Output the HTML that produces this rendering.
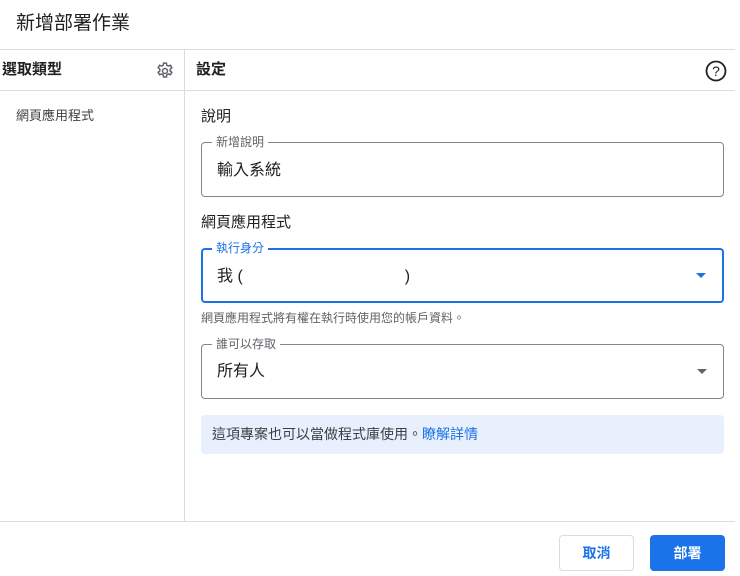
<!DOCTYPE html>
<html><head><meta charset="utf-8"><style>
*{margin:0;padding:0;box-sizing:border-box}
body{width:740px;height:576px;background:#fff;font-family:"Liberation Sans","Noto Sans CJK TC",sans-serif;color:#202124;position:relative;overflow:hidden}
.a{position:absolute}
.box{position:absolute;border:1px solid #80868b;border-radius:4px}
.lab{position:absolute;top:-9px;left:10px;background:#fff;padding:0 4px;font-size:12px;color:#5f6368;line-height:16px}
</style></head><body>
<div class="a" style="left:16px;top:11px;font-size:19px;line-height:26px">新增部署作業</div>
<div class="a" style="left:0;top:49px;width:735px;height:1px;background:#dadce0"></div>
<div class="a" style="left:0;top:90px;width:735px;height:1px;background:#dadce0"></div>
<div class="a" style="left:184px;top:50px;width:1px;height:472px;background:#dadce0"></div>
<div class="a" style="left:0;top:521px;width:735px;height:1px;background:#dadce0"></div>
<div class="a" style="left:2px;top:60px;font-size:15px;font-weight:bold;line-height:20px">選取類型</div>
<svg class="a" style="left:155px;top:61px" width="20" height="20" viewBox="0 0 24 24"><path fill="none" stroke="#5f6368" stroke-width="1.8" d="M10.3 2.5h3.4l.5 2.6 1.8 1 2.5-.9 1.7 2.9-2 1.7v2.1l2 1.7-1.7 2.9-2.5-.9-1.8 1-.5 2.6h-3.4l-.5-2.6-1.8-1-2.5.9-1.7-2.9 2-1.7v-2.1l-2-1.7 1.7-2.9 2.5.9 1.8-1z"/><circle cx="12" cy="12" r="3" fill="none" stroke="#5f6368" stroke-width="1.8"/></svg>
<div class="a" style="left:196px;top:60px;font-size:15px;font-weight:bold;line-height:20px">設定</div>
<svg class="a" style="left:705px;top:60px" width="22" height="22" viewBox="0 0 22 22"><circle cx="11" cy="11" r="9.5" fill="none" stroke="#202124" stroke-width="1.8"/><text x="11" y="16" text-anchor="middle" font-size="14" font-family="Liberation Sans" fill="#202124">?</text></svg>
<div class="a" style="left:16px;top:107px;font-size:13px;color:#3c4043;line-height:18px">網頁應用程式</div>
<div class="a" style="left:201px;top:107px;font-size:15px;line-height:20px">說明</div>
<div class="box" style="left:201px;top:142px;width:523px;height:55px"><div class="lab">新增說明</div><div class="a" style="left:15px;top:17px;font-size:16px;line-height:22px">輸入系統</div></div>
<div class="a" style="left:201px;top:213px;font-size:15px;line-height:20px">網頁應用程式</div>
<div class="box" style="left:201px;top:248px;width:523px;height:55px;border:2px solid #1a73e8"><div class="lab" style="color:#1a73e8;top:-10px;left:9px">執行身分</div><div class="a" style="left:14px;top:16px;font-size:16px;line-height:22px">我 (<span style="margin-left:162px">)</span></div>
<div class="a" style="right:16px;top:23px;width:0;height:0;border-left:5px solid transparent;border-right:5px solid transparent;border-top:5px solid #1a73e8"></div></div>
<div class="a" style="left:201px;top:310px;font-size:12px;color:#5f6368;line-height:16px">網頁應用程式將有權在執行時使用您的帳戶資料。</div>
<div class="box" style="left:201px;top:344px;width:523px;height:55px"><div class="lab">誰可以存取</div><div class="a" style="left:15px;top:16px;font-size:16px;line-height:22px">所有人</div>
<div class="a" style="right:16px;top:24px;width:0;height:0;border-left:5px solid transparent;border-right:5px solid transparent;border-top:5px solid #5f6368"></div></div>
<div class="a" style="left:201px;top:415px;width:523px;height:39px;background:#e8f0fe;border-radius:4px;font-size:14px;line-height:39px;padding-left:11px;color:#3c4043">這項專案也可以當做程式庫使用。<span style="color:#1a73e8">瞭解詳情</span></div>
<div class="a" style="left:559px;top:535px;width:75px;height:36px;border:1px solid #dadce0;border-radius:4px;color:#1a73e8;font-size:14px;font-weight:bold;text-align:center;line-height:34px">取消</div>
<div class="a" style="left:650px;top:535px;width:75px;height:36px;background:#1a73e8;border-radius:4px;color:#fff;font-size:14px;font-weight:bold;text-align:center;line-height:36px">部署</div>
</body></html>
